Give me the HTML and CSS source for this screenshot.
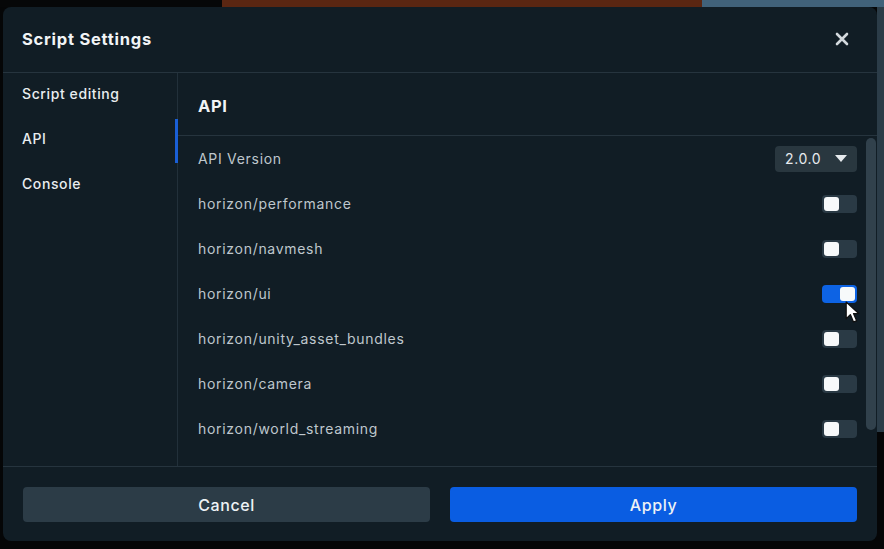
FILE: index.html
```html
<!DOCTYPE html>
<html lang="en">
<head>
<meta charset="utf-8">
<title>Script Settings</title>
<link rel="stylesheet" href="styles.css">
</head>
<body>
<div class="backdrop">
  <div class="bg-strip">
    <div class="bg-black"></div>
    <div class="bg-orange"></div>
    <div class="bg-blue"></div>
  </div>
  <div class="stage">
    <div class="dialog">
      <header class="dlg-header">
        <h1 class="dlg-title">Script Settings</h1>
        <button class="close-btn" aria-label="Close">
          <svg width="14" height="14" viewBox="0 0 14 14"><path d="M2 2 L12 12 M12 2 L2 12" stroke="#d3d9dd" stroke-width="2.6" stroke-linecap="round"/></svg>
        </button>
      </header>
      <div class="dlg-body">
        <nav class="sidebar">
          <div class="nav-item">Script editing</div>
          <div class="nav-item active">API</div>
          <div class="nav-item">Console</div>
        </nav>
        <section class="content">
          <div class="content-head">API</div>
          <div class="content-scroll">
            <div class="rows">
              <div class="row">
                <span class="label">API Version</span>
                <div class="select">2.0.0
                  <svg width="12" height="7" viewBox="0 0 12 7"><path d="M0 0 H12 L6 7 Z" fill="#e6eaed"/></svg>
                </div>
              </div>
              <div class="row"><span class="label">horizon/performance</span><span class="toggle"><span class="knob"></span></span></div>
              <div class="row"><span class="label">horizon/navmesh</span><span class="toggle"><span class="knob"></span></span></div>
              <div class="row"><span class="label">horizon/ui</span><span class="toggle on"><span class="knob"></span></span>
                <svg class="cursor" width="17" height="23" viewBox="0 0 16 22"><path d="M1 1 L1 17 L5 13 L8 20 L11 19 L8 12 L13 12 Z" fill="#fff" stroke="#111" stroke-width="1.2" stroke-linejoin="round"/></svg>
              </div>
              <div class="row"><span class="label">horizon/unity_asset_bundles</span><span class="toggle"><span class="knob"></span></span></div>
              <div class="row"><span class="label">horizon/camera</span><span class="toggle"><span class="knob"></span></span></div>
              <div class="row"><span class="label">horizon/world_streaming</span><span class="toggle"><span class="knob"></span></span></div>
            </div>
            <div class="scrollbar"><div class="thumb"></div></div>
          </div>
        </section>
      </div>
      <footer class="dlg-footer">
        <button class="btn btn-cancel">Cancel</button>
        <button class="btn btn-apply">Apply</button>
      </footer>
    </div>
    <div class="side-right">
      <div class="side-right-top"></div>
    </div>
  </div>
</div>
</body>
</html>
```
FILE: styles.css
```css
* { box-sizing: border-box; }
html, body { margin: 0; padding: 0; }
body {
  width: 884px;
  height: 549px;
  overflow: hidden;
  background: #050607;
  font-family: "Inter", "Noto Sans", sans-serif;
  color: #e8ecef;
}
.backdrop {
  display: flex;
  flex-direction: column;
  height: 549px;
}
.bg-strip {
  display: flex;
  height: 7px;
  flex: none;
}
.bg-black { width: 222px; background: #060708; }
.bg-orange { width: 480px; background: #5a2612; }
.bg-blue { flex: 1; background: #41627a; }
.stage {
  display: flex;
  padding-left: 3px;
  flex: none;
}
.side-right {
  flex: 1;
  display: flex;
  flex-direction: column;
}
.side-right-top {
  height: 425px;
  background: #2b3c48;
}
.dialog {
  width: 874px;
  height: 534px;
  background: #111d25;
  border-radius: 8px;
  display: flex;
  flex-direction: column;
  overflow: hidden;
}
.dlg-header {
  height: 66px;
  flex: none;
  display: flex;
  align-items: center;
  justify-content: space-between;
  padding: 0 28px 2px 19px;
  border-bottom: 1px solid #26343e;
}
.dlg-title {
  margin: 0;
  font-size: 16.5px;
  font-weight: 700;
  color: #f1f4f6;
  letter-spacing: 0.75px;
}
.close-btn {
  background: none;
  border: 0;
  padding: 0;
  width: 14px;
  height: 14px;
  display: flex;
}
.dlg-body {
  flex: 1;
  display: flex;
  min-height: 0;
}
.sidebar {
  width: 175px;
  flex: none;
  border-right: 1px solid #22303a;
  display: flex;
  flex-direction: column;
}
.nav-item {
  height: 45px;
  display: flex;
  align-items: center;
  padding: 0 0 4px 19px;
  font-size: 14px;
  font-weight: 500;
  color: #e9edf0;
  letter-spacing: 0.6px;
  position: relative;
}
.nav-item.active::after {
  content: "";
  position: absolute;
  right: -1px;
  top: 1px;
  bottom: 0;
  width: 3px;
  background: #1a5fd6;
}
.content {
  flex: 1;
  display: flex;
  flex-direction: column;
  min-width: 0;
}
.content-head {
  height: 63px;
  flex: none;
  display: flex;
  align-items: center;
  padding: 3px 0 0 20px;
  font-size: 16.5px;
  font-weight: 700;
  color: #f1f4f6;
  letter-spacing: 0.6px;
  border-bottom: 1px solid #26343e;
}
.content-scroll {
  flex: 1;
  display: flex;
  overflow: hidden;
}
.rows {
  flex: 1;
  display: flex;
  flex-direction: column;
}
.row {
  height: 45px;
  flex: none;
  display: flex;
  align-items: center;
  justify-content: space-between;
  padding: 0 8px 0 20px;
  position: relative;
}
.label {
  font-size: 14px;
  color: #bfc7cd;
  letter-spacing: 0.7px;
}
.select {
  width: 82px;
  height: 26px;
  background: #29373f;
  border-radius: 4px;
  display: flex;
  align-items: center;
  justify-content: space-between;
  padding: 0 10px 0 10px;
  font-size: 14px;
  letter-spacing: 0.6px;
  color: #e6eaed;
}
.toggle {
  width: 35px;
  height: 18px;
  border-radius: 4px;
  background: #2a3a45;
  display: flex;
  align-items: center;
  padding: 0 2px;
}
.knob {
  width: 15px;
  height: 14px;
  border-radius: 3px;
  background: #f7f9fa;
}
.toggle.on {
  background: #0d63e4;
  justify-content: flex-end;
}
.cursor {
  position: absolute;
  right: 3px;
  top: 30px;
}
.scrollbar {
  width: 12px;
  flex: none;
  padding: 2px 1px 36px 1px;
  display: flex;
}
.thumb {
  flex: 1;
  background: #31414c;
  border-radius: 5px;
}
.dlg-footer {
  height: 75px;
  flex: none;
  border-top: 1px solid #26343e;
  display: flex;
  gap: 20px;
  padding: 20px 20px 18px 20px;
}
.btn {
  flex: 1;
  height: 35px;
  border: 0;
  border-radius: 4px;
  font-family: inherit;
  font-size: 16px;
  font-weight: 500;
  letter-spacing: 0.6px;
  color: #eef2f5;
}
.btn-cancel { background: #2c3c47; }
.btn-apply { background: #0a5de2; }
```
